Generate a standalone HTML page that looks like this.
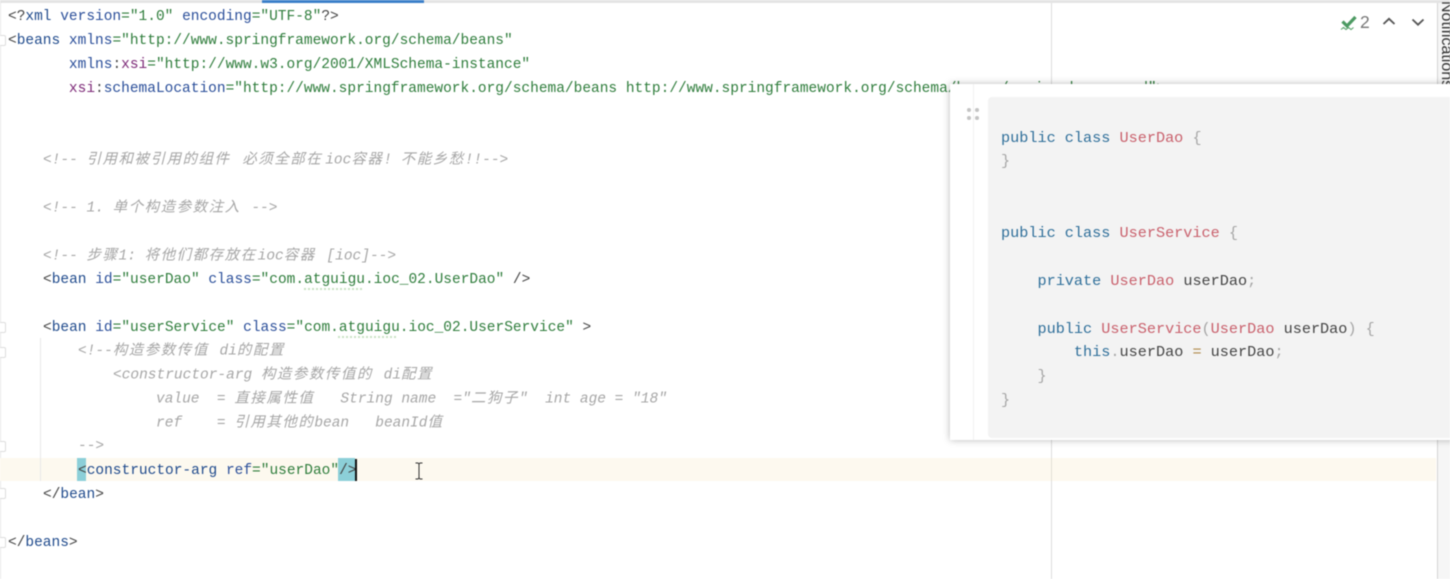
<!DOCTYPE html>
<html><head><meta charset="utf-8">
<style>
html,body{margin:0;padding:0;width:1450px;height:579px;overflow:hidden;background:#fff}
#root{position:relative;width:1450px;height:579px;overflow:hidden;background:#fff;filter:blur(.45px)}
.l{position:absolute;left:8px;height:24px;line-height:24px;white-space:pre;font:14.5px/24px "Liberation Mono","Noto Sans CJK SC",monospace;color:#444}
.t{color:#1f4a8c}.a{color:#2b4f9a}.v{color:#2f7d3c}.x{color:#7d2a78}.p{color:#444}
.c{color:#a6a6a6;font-style:italic;transform:translateY(.6px)}
.z{font-family:"Noto Sans CJK SC",sans-serif;font-size:14.5px;letter-spacing:1.5px}
.r{position:absolute;left:1001px;white-space:pre;font:15.2px/24px "Liberation Mono",monospace;color:#444}
.k{color:#2f6f9a}.n{color:#c9606c}.g{color:#a5a5a5}
.d{position:absolute;width:4px;height:4px;border-radius:2px;background:#c4c4c4}
.h{position:absolute;background:#8ccfd8;height:23px;top:458px}
.f{position:absolute;left:0;width:5px;height:9px;border:1px solid #ddd;border-left:0;background:#fff;border-radius:0 2px 2px 0}
.w{position:absolute;height:2px;background:repeating-linear-gradient(90deg,#c9e2c4 0 2px,#fff 2px 4px)}
</style></head><body><div id="root">
<div style="position:absolute;left:0;top:0;width:1450px;height:3px;background:#e4e4e4"></div>
<div style="position:absolute;left:262px;top:0;width:162px;height:3px;background:#3b7fc9"></div>
<div style="position:absolute;left:0;top:3px;width:1px;height:576px;background:#e8e8e8"></div>
<div style="position:absolute;left:1051px;top:3px;width:1px;height:576px;background:#dcdcdc"></div>
<div style="position:absolute;left:1437px;top:3px;width:13px;height:576px;background:#f6f6f6;border-left:1px solid #d4d4d4;box-sizing:border-box"></div>
<div style="position:absolute;left:1454px;top:1px;width:0;height:0;white-space:nowrap;transform:rotate(90deg);transform-origin:0 0;font:16px/16px 'Liberation Sans',sans-serif;color:#333"><span style="position:absolute;left:0;top:0">Notifications</span></div>
<div style="position:absolute;left:0;top:458px;width:1436px;height:23px;background:#fdf9ef"></div>
<div style="position:absolute;left:1051px;top:458px;width:1px;height:23px;background:#e2dfd6"></div>
<div style="position:absolute;left:40px;top:338px;width:1px;height:143px;background:#e8e8e8"></div>
<div class="h" style="left:77px;width:9px"></div>
<div class="h" style="left:338px;width:17px"></div>
<div class="f" style="top:35px"></div><div class="f" style="top:322px"></div><div class="f" style="top:347px"></div><div class="f" style="top:441px"></div><div class="f" style="top:488px"></div><div class="f" style="top:537px"></div>

<div class="l" style="top:4.500px"><span class="p">&lt;?</span><span class="t">xml</span> <span class="a">version</span><span class="v">="1.0"</span> <span class="a">encoding</span><span class="v">="UTF-8"</span><span class="p">?&gt;</span></div>
<div class="l" style="top:28.500px"><span class="p">&lt;</span><span class="t">beans</span> <span class="a">xmlns</span><span class="v">="http://www.springframework.org/schema/beans"</span></div>
<div class="l" style="top:52.500px">       <span class="a">xmlns</span><span class="p">:</span><span class="x">xsi</span><span class="v">="http://www.w3.org/2001/XMLSchema-instance"</span></div>
<div class="l" style="top:76.500px">       <span class="x">xsi</span><span class="p">:</span><span class="a">schemaLocation</span><span class="v">="http://www.springframework.org/schema/beans http://www.springframework.org/schema/beans/spring-beans.xsd"&gt;</span></div>

<div class="l c" style="top:146px;left:43px">&lt;!-- <span class="z">引用和被引用的组件</span> <span class="z" style="margin-left:3px">必须全部在</span><span style="margin-left:3px">ioc</span><span class="z">容器</span>! <span class="z">不能乡愁</span>!!--&gt;</div>
<div class="l c" style="top:194px;left:43px">&lt;!-- 1. <span class="z">单个构造参数注入</span> <span style="margin-left:2px">--&gt;</span></div>
<div class="l c" style="top:242px;left:43px">&lt;!-- <span class="z">步骤</span>1: <span class="z" style="margin-right:1px">将他们都存放在</span>ioc<span class="z" style="margin-right:2px">容器</span> [ioc]--&gt;</div>
<div class="l" style="top:268px;left:43px"><span class="p">&lt;</span><span class="t">bean</span> <span class="a">id</span><span class="v">="userDao"</span> <span class="a">class</span><span class="v">="com.atguigu.ioc_02.UserDao"</span> <span class="p">/&gt;</span></div>
<div class="w" style="left:304px;top:288px;width:60px"></div>
<div class="l" style="top:316px;left:43px"><span class="p">&lt;</span><span class="t">bean</span> <span class="a">id</span><span class="v">="userService"</span> <span class="a">class</span><span class="v">="com.atguigu.ioc_02.UserService"</span> <span class="p">&gt;</span></div>
<div class="w" style="left:338px;top:336px;width:60px"></div>
<div class="l c" style="top:337px;left:78px">&lt;!--<span class="z" style="margin-right:2px">构造参数传值</span> di<span class="z">的配置</span></div>
<div class="l c" style="top:361px;left:113px">&lt;constructor-arg <span class="z" style="margin-right:2px">构造参数传值的</span> di<span class="z">配置</span></div>
<div class="l c" style="top:385px;left:156px">value  = <span class="z">直接属性值</span>   String name  ="<span class="z">二狗子</span>"  int age = "18"</div>
<div class="l c" style="top:409px;left:156px">ref    = <span class="z">引用其他的</span>bean   beanId<span class="z">值</span></div>
<div class="l c" style="top:434.400px;left:78px;font-style:normal">--&gt;</div>
<div class="l" style="top:459px;left:78px"><span class="p">&lt;</span><span class="t">constructor-arg</span> <span class="a">ref</span><span class="v">="userDao"</span><span class="p">/&gt;</span></div>
<div style="position:absolute;left:355px;top:459px;width:2px;height:22px;background:#111"></div>
<div class="l" style="top:483px;left:43px"><span class="p">&lt;/</span><span class="t">bean</span><span class="p">&gt;</span></div>
<div class="l" style="top:531px;left:8px"><span class="p">&lt;/</span><span class="t">beans</span><span class="p">&gt;</span></div>

<svg style="position:absolute;left:414px;top:462px" width="10" height="18" viewBox="0 0 10 18"><path d="M1.500 1h2.500l1 1 1-1h2.500M5 2v14M1.500 17h2.500l1-1 1 1h2.500" fill="none" stroke="#333" stroke-width="1"/></svg>

<svg style="position:absolute;left:1340px;top:14px" width="18" height="18" viewBox="0 0 18 18"><path d="M2.500 7.500l4.500 4.500 8.500-9" fill="none" stroke="#4c9a62" stroke-width="3.200"/><path d="M1 15.500l2.500-2 2.500 2 2.500-2 2.500 2 2.500-2" fill="none" stroke="#5aa56e" stroke-width="1.100"/></svg>
<div style="position:absolute;left:1360px;top:12px;font:17.500px/20px 'Liberation Sans',sans-serif;color:#777">2</div>
<svg style="position:absolute;left:1382px;top:16px" width="14" height="12" viewBox="0 0 14 12"><path d="M1.500 8L7 2.800 12.500 8" fill="none" stroke="#555" stroke-width="1.800"/></svg>
<svg style="position:absolute;left:1411px;top:16px" width="14" height="12" viewBox="0 0 14 12"><path d="M1.500 3.500L7 8.700l5.500-5.200" fill="none" stroke="#555" stroke-width="1.800"/></svg>

<div style="position:absolute;left:950px;top:84px;width:520px;height:356px;background:#fff;box-shadow:0 0 7px rgba(0,0,0,.28)"></div>
<div style="position:absolute;left:973px;top:84px;width:1px;height:356px;background:#f2f2f2"></div>
<div style="position:absolute;left:988px;top:97px;width:462px;height:341px;background:#f3f3f3;border-radius:4px 0 0 4px"></div>
<div class="d" style="left:967px;top:108px"></div><div class="d" style="left:975px;top:108px"></div><div class="d" style="left:967px;top:116px"></div><div class="d" style="left:975px;top:116px"></div>

<div class="r" style="top:126px"><span class="k">public class</span> <span class="n">UserDao</span> <span class="g">{</span></div>
<div class="r" style="top:149px"><span class="g">}</span></div>
<div class="r" style="top:221px"><span class="k">public class</span> <span class="n">UserService</span> <span class="g">{</span></div>
<div class="r" style="top:269px">    <span class="k">private</span> <span class="n">UserDao</span> userDao<span class="g">;</span></div>
<div class="r" style="top:317px">    <span class="k">public</span> <span class="n">UserService</span><span class="g">(</span><span class="n">UserDao</span> userDao<span class="g">) {</span></div>
<div class="r" style="top:340px">        <span class="k">this</span><span class="g">.</span>userDao <span style="color:#b08a4a">=</span> userDao<span class="g">;</span></div>
<div class="r" style="top:364px">    <span class="g">}</span></div>
<div class="r" style="top:388px"><span class="g">}</span></div>
</div></body></html>
